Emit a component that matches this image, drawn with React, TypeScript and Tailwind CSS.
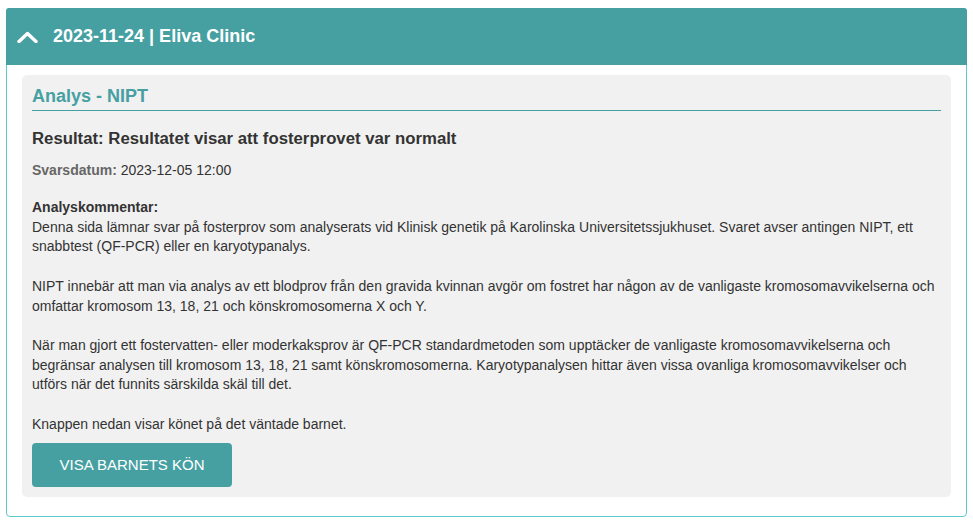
import React from "react";

export default function App() {
  return (
    <div
      className="min-h-[525px] w-[973px] bg-white pt-[8px] pl-[6px]"
      style={{ fontFamily: '"Liberation Sans", Arial, sans-serif' }}
    >
      <div className="w-[961px] rounded-[4px] border border-[#5ccaca] bg-white">
        <div className="flex h-[57px] items-center rounded-t-[3px] bg-[#46a0a2] pl-[11px] -mx-px -mt-px">
          <svg width="21" height="12" viewBox="0 0 21 12" className="mr-[15px]">
            <path d="M2 10.5 L10.5 2.5 L19 10.5" fill="none" stroke="white" strokeWidth="3.4" strokeLinecap="round" strokeLinejoin="round" />
          </svg>
          <span className="text-[18px] font-bold text-white">2023-11-24 | Eliva Clinic</span>
        </div>
        <div className="px-[15px] pt-[10px] pb-[19px]">
          <div className="rounded-[5px] bg-[#f1f1f1] p-[10px]">
            <div className="border-b border-[#46a0a2] pb-[3px] text-[18px] leading-[22px] font-bold text-[#46a0a2]">
              Analys - NIPT
            </div>
            <div className="mt-[18px] text-[16.75px] leading-[20px] font-bold text-[#333]">
              Resultat: Resultatet visar att fosterprovet var normalt
            </div>
            <div className="mt-[11px] text-[14px] leading-[20px] text-[#333]">
              <span className="font-bold text-[#666]">Svarsdatum:</span> 2023-12-05 12:00
            </div>
            <div className="mt-[18px] text-[14px] leading-[19.7px] text-[#333]">
              <div className="font-bold">Analyskommentar:</div>
              <p>
                Denna sida lämnar svar på fosterprov som analyserats vid Klinisk genetik på Karolinska Universitetssjukhuset. Svaret avser antingen NIPT, ett snabbtest (QF-PCR) eller en karyotypanalys.
              </p>
              <p className="mt-[19.7px]">
                NIPT innebär att man via analys av ett blodprov från den gravida kvinnan avgör om fostret har någon av de vanligaste kromosomavvikelserna och omfattar kromosom 13, 18, 21 och könskromosomerna X och Y.
              </p>
              <p className="mt-[19.7px]">
                När man gjort ett fostervatten- eller moderkaksprov är QF-PCR standardmetoden som upptäcker de vanligaste kromosomavvikelserna och begränsar analysen till kromosom 13, 18, 21 samt könskromosomerna. Karyotypanalysen hittar även vissa ovanliga kromosomavvikelser och utförs när det funnits särskilda skäl till det.
              </p>
              <p className="mt-[19.7px]">Knappen nedan visar könet på det väntade barnet.</p>
            </div>
            <button className="mt-[9px] flex h-[44px] w-[200px] items-center justify-center rounded-[4px] bg-[#46a0a2] text-[15px] text-white">
              VISA BARNETS KÖN
            </button>
          </div>
        </div>
      </div>
    </div>
  );
}
